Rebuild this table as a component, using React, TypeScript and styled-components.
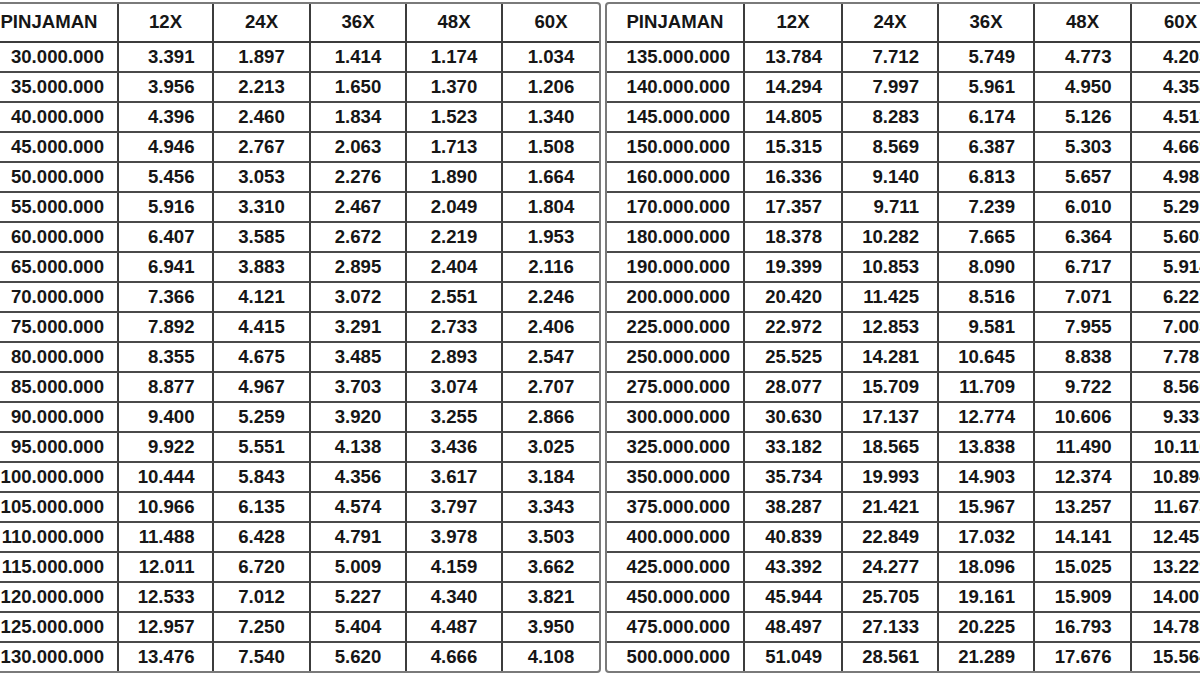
import React from "react";
import styled, { createGlobalStyle } from "styled-components";

type Row = [string, string, string, string, string, string];

const LEFT_ROWS: Row[] = [
  ["30.000.000", "3.391", "1.897", "1.414", "1.174", "1.034"],
  ["35.000.000", "3.956", "2.213", "1.650", "1.370", "1.206"],
  ["40.000.000", "4.396", "2.460", "1.834", "1.523", "1.340"],
  ["45.000.000", "4.946", "2.767", "2.063", "1.713", "1.508"],
  ["50.000.000", "5.456", "3.053", "2.276", "1.890", "1.664"],
  ["55.000.000", "5.916", "3.310", "2.467", "2.049", "1.804"],
  ["60.000.000", "6.407", "3.585", "2.672", "2.219", "1.953"],
  ["65.000.000", "6.941", "3.883", "2.895", "2.404", "2.116"],
  ["70.000.000", "7.366", "4.121", "3.072", "2.551", "2.246"],
  ["75.000.000", "7.892", "4.415", "3.291", "2.733", "2.406"],
  ["80.000.000", "8.355", "4.675", "3.485", "2.893", "2.547"],
  ["85.000.000", "8.877", "4.967", "3.703", "3.074", "2.707"],
  ["90.000.000", "9.400", "5.259", "3.920", "3.255", "2.866"],
  ["95.000.000", "9.922", "5.551", "4.138", "3.436", "3.025"],
  ["100.000.000", "10.444", "5.843", "4.356", "3.617", "3.184"],
  ["105.000.000", "10.966", "6.135", "4.574", "3.797", "3.343"],
  ["110.000.000", "11.488", "6.428", "4.791", "3.978", "3.503"],
  ["115.000.000", "12.011", "6.720", "5.009", "4.159", "3.662"],
  ["120.000.000", "12.533", "7.012", "5.227", "4.340", "3.821"],
  ["125.000.000", "12.957", "7.250", "5.404", "4.487", "3.950"],
  ["130.000.000", "13.476", "7.540", "5.620", "4.666", "4.108"],
];

const RIGHT_ROWS: Row[] = [
  ["135.000.000", "13.784", "7.712", "5.749", "4.773", "4.203"],
  ["140.000.000", "14.294", "7.997", "5.961", "4.950", "4.358"],
  ["145.000.000", "14.805", "8.283", "6.174", "5.126", "4.513"],
  ["150.000.000", "15.315", "8.569", "6.387", "5.303", "4.669"],
  ["160.000.000", "16.336", "9.140", "6.813", "5.657", "4.980"],
  ["170.000.000", "17.357", "9.711", "7.239", "6.010", "5.291"],
  ["180.000.000", "18.378", "10.282", "7.665", "6.364", "5.603"],
  ["190.000.000", "19.399", "10.853", "8.090", "6.717", "5.914"],
  ["200.000.000", "20.420", "11.425", "8.516", "7.071", "6.225"],
  ["225.000.000", "22.972", "12.853", "9.581", "7.955", "7.003"],
  ["250.000.000", "25.525", "14.281", "10.645", "8.838", "7.781"],
  ["275.000.000", "28.077", "15.709", "11.709", "9.722", "8.560"],
  ["300.000.000", "30.630", "17.137", "12.774", "10.606", "9.338"],
  ["325.000.000", "33.182", "18.565", "13.838", "11.490", "10.116"],
  ["350.000.000", "35.734", "19.993", "14.903", "12.374", "10.894"],
  ["375.000.000", "38.287", "21.421", "15.967", "13.257", "11.673"],
  ["400.000.000", "40.839", "22.849", "17.032", "14.141", "12.451"],
  ["425.000.000", "43.392", "24.277", "18.096", "15.025", "13.229"],
  ["450.000.000", "45.944", "25.705", "19.161", "15.909", "14.007"],
  ["475.000.000", "48.497", "27.133", "20.225", "16.793", "14.785"],
  ["500.000.000", "51.049", "28.561", "21.289", "17.676", "15.564"],
];

const HEADERS = ["PINJAMAN", "12X", "24X", "36X", "48X", "60X"];

const LEFT_COLS = [138, 95, 97, 96, 96, 96];
const RIGHT_COLS = [138, 98, 96, 96, 97, 97];

const GlobalStyle = createGlobalStyle`
  html, body {
    margin: 0;
    padding: 0;
    background: #fff;
    overflow: hidden;
  }
  body {
    font-family: "Liberation Sans", Arial, sans-serif;
  }
`;

const RateTable: React.FC<{ rows: Row[]; cols: number[] }> = ({ rows, cols }) => {
  // a column holding any 5-digit amount is right aligned inside a fixed slot
  const wide = HEADERS.map((_, i) => rows.some((r) => r[i].length > 5));

  return (
    <Grid $cols={cols.map((c) => `${c}px`).join(" ")} $rows={rows.length}>
      {HEADERS.map((h, i) => (
        <HeadCell key={h} $last={i === HEADERS.length - 1}>
          {h}
        </HeadCell>
      ))}
      {rows.map((row, r) =>
        row.map((value, c) =>
          c === 0 ? (
            <LoanCell key={`${r}-${c}`} $last={false} $bottom={r === rows.length - 1}>
              {value}
            </LoanCell>
          ) : (
            <Cell
              key={`${r}-${c}`}
              $last={c === row.length - 1}
              $bottom={r === rows.length - 1}
            >
              {wide[c] ? <Amount>{value}</Amount> : value}
            </Cell>
          )
        )
      )}
    </Grid>
  );
};

export default function App() {
  return (
    <>
      <GlobalStyle />
      <Page>
        <RateTable rows={LEFT_ROWS} cols={LEFT_COLS} />
        <RateTable rows={RIGHT_ROWS} cols={RIGHT_COLS} />
      </Page>
    </>
  );
}

const Page = styled.div`
  display: flex;
  flex-direction: row;
  align-items: flex-start;
  gap: 4px;
  padding-top: 2px;
  margin-left: -21px;
  width: 1300px;
`;

const Grid = styled.div<{ $cols: string; $rows: number }>`
  display: grid;
  grid-template-columns: ${(p) => p.$cols};
  grid-template-rows: 39px repeat(${(p) => p.$rows - 1}, 30px) 28px;
  border: 2px solid #7a7a7a;
  border-radius: 4px;
  background: #fff;
  flex-shrink: 0;
`;

const BaseCell = styled.div<{ $last: boolean }>`
  box-sizing: border-box;
  display: flex;
  align-items: center;
  justify-content: center;
  border-right: ${(p) => (p.$last ? "none" : "2px solid #3c3c3c")};
  font-family: "Liberation Sans", Arial, sans-serif;
  font-weight: 700;
  font-size: 18.6px;
  color: #161616;
  white-space: nowrap;
`;

const HeadCell = styled(BaseCell)`
  border-bottom: 2px solid #3c3c3c;
  padding-bottom: 1px;
`;

const Cell = styled(BaseCell)<{ $bottom: boolean }>`
  border-bottom: ${(p) => (p.$bottom ? "none" : "2px solid #4a4a4a")};
`;

const LoanCell = styled(Cell)`
  justify-content: flex-end;
  padding-right: 13px;
`;

const Amount = styled.span`
  display: inline-block;
  width: 58px;
  text-align: right;
`;
